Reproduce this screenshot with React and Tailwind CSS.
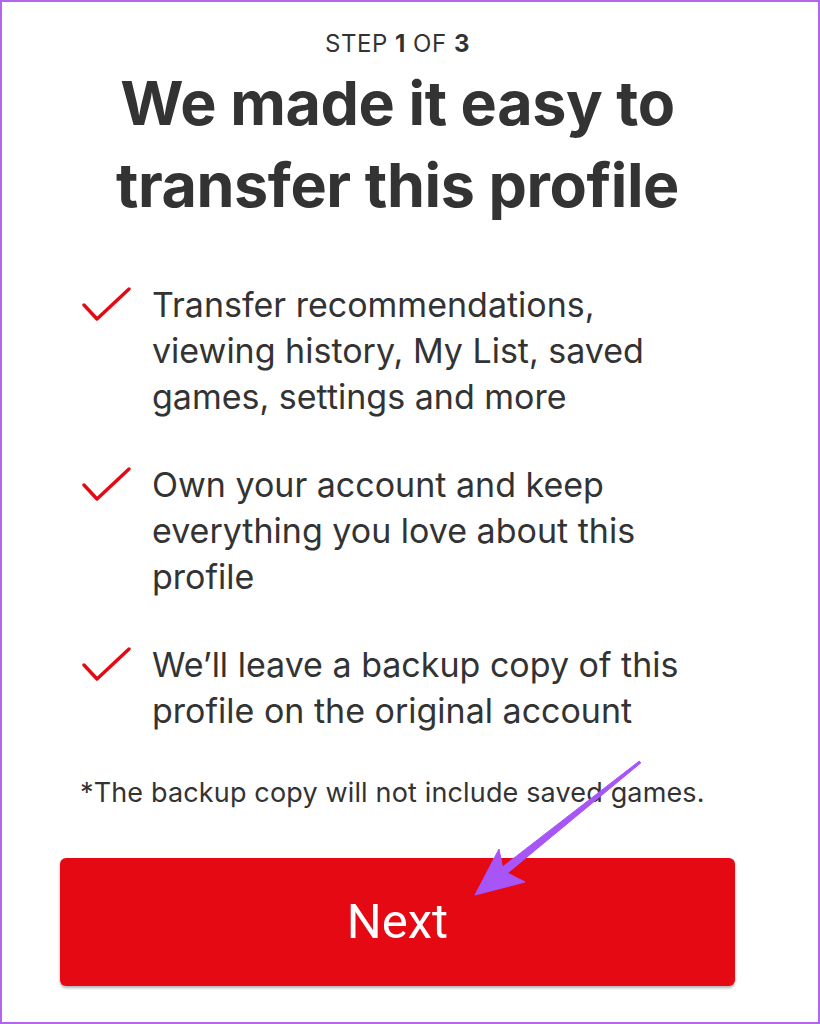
import React from "react";

const Check = () => (
  <svg width="50" height="36" viewBox="0 0 50 36" className="shrink-0">
    <polyline points="2,18 15,32 47,2" fill="none" stroke="#e50914" strokeWidth="3.4" strokeLinecap="round" strokeLinejoin="round" />
  </svg>
);

const items = [
  ["Transfer recommendations,", "viewing history, My List, saved", "games, settings and more"],
  ["Own your account and keep", "everything you love about this", "profile"],
  ["We\u2019ll leave a backup copy of this", "profile on the original account"],
];

export default function App() {
  return (
    <div className="relative w-[820px] h-[1024px] bg-white border-2 border-[#b266f0] overflow-hidden" style={{ fontFamily: "Inter, 'Noto Sans', sans-serif" }}>
      <div className="ml-[58px] w-[675px] flex flex-col text-[#333333]">
        <div className="mt-[27px] text-center text-[24px] leading-[30px] tracking-[0.5px]">
          STEP <span className="font-bold">1</span> OF <span className="font-bold">3</span>
        </div>
        <h1 className="mt-[3px] text-center text-[61px] leading-[82px] font-bold tracking-[-0.4px]">
          We made it easy to<br />transfer this profile
        </h1>
        <ul className="mt-[56px] flex flex-col gap-[42px]">
          {items.map((lines, i) => (
            <li key={i} className="flex">
              <div className="w-[92px] pl-[22px] pt-[5px] shrink-0">
                <Check />
              </div>
              <div className="text-[34px] leading-[46px] tracking-[0px]">
                {lines.map((l, j) => (
                  <div key={j}>{l}</div>
                ))}
              </div>
            </li>
          ))}
        </ul>
        <p className="mt-[43px] ml-[20px] text-[27px] leading-[32px] tracking-[0.15px]">
          *The backup copy will not include saved games.
        </p>
        <button className="mt-[49px] w-[675px] h-[128px] rounded-[6px] bg-[#e50914] text-white text-[49px] shadow-[0_2px_3px_rgba(0,0,0,0.3)] flex items-center justify-center" style={{ fontFamily: "Roboto, sans-serif" }}>
          Next
        </button>
      </div>
      <svg className="absolute left-0 top-0 pointer-events-none" width="820" height="1024" viewBox="0 0 820 1024">
        <polygon
          points="640.8,762.9 507.5,873.1 525,882 475,895 499,849 502.5,866.9 639.2,761.1"
          fill="#a855f7"
          stroke="#a855f7"
          strokeWidth="1"
          strokeLinejoin="round"
          transform="translate(-2,-2)"
        />
      </svg>
    </div>
  );
}
